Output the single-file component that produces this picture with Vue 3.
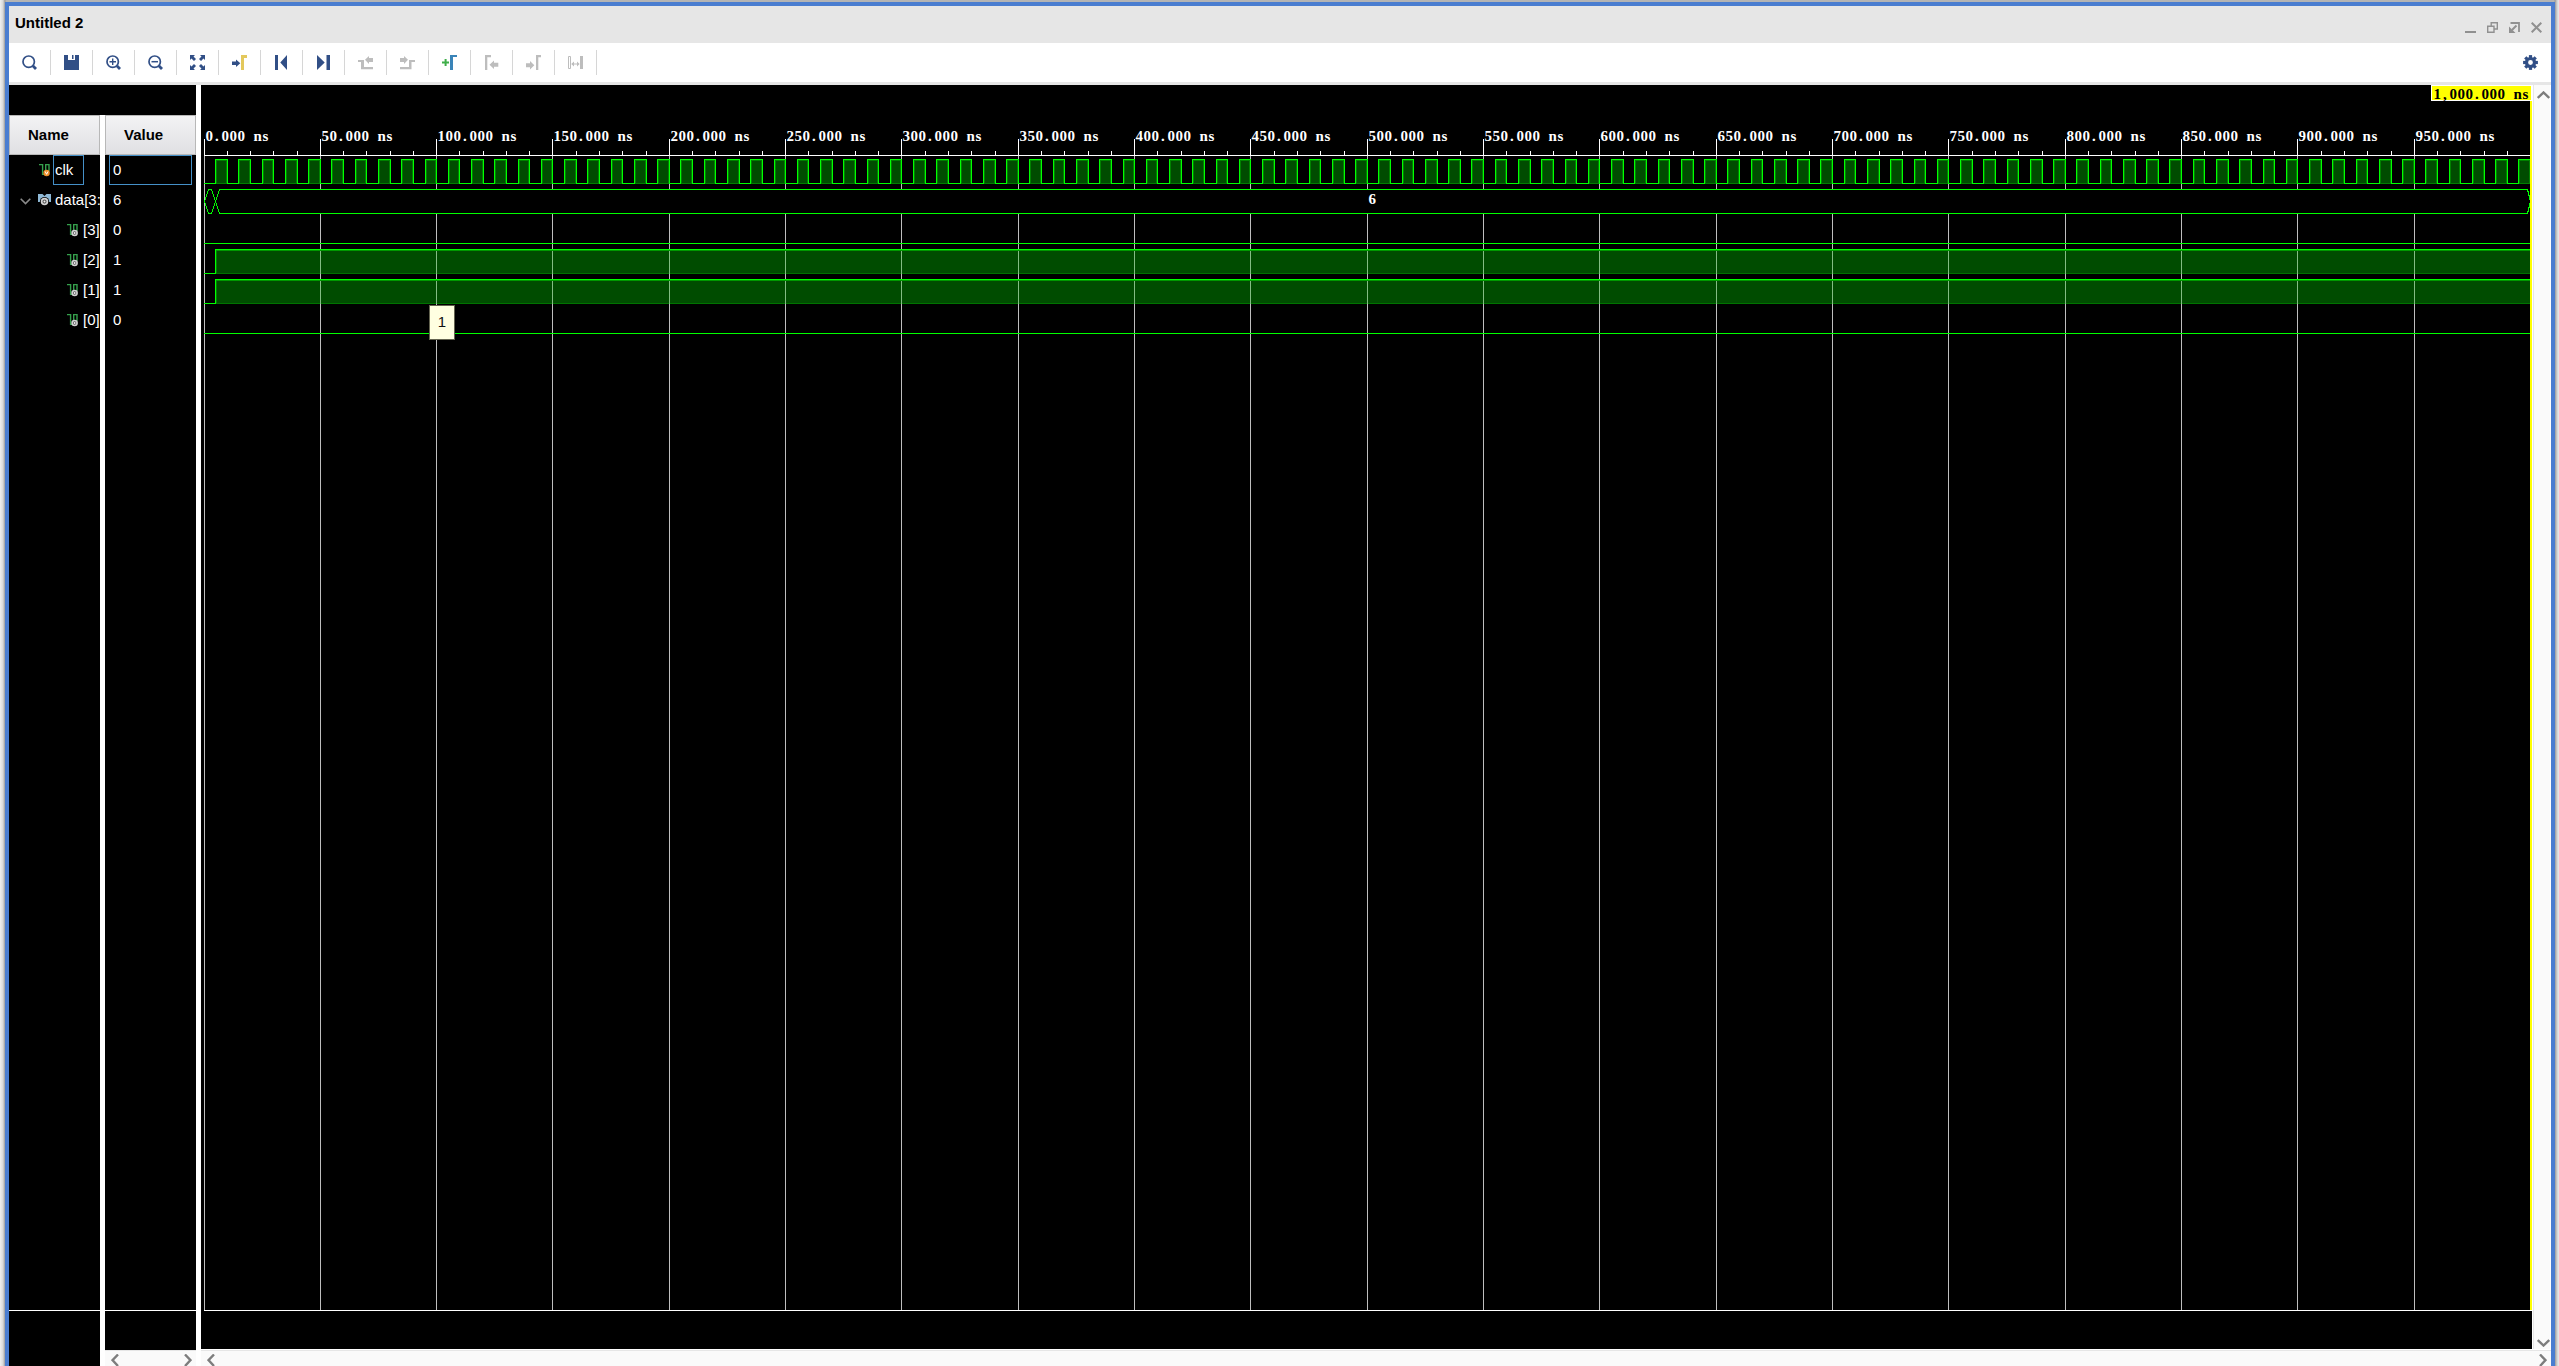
<script setup>
const pxPerNs = 2.3266
const x0 = 3
const at = (ns) => Math.floor(x0 + ns * pxPerNs)

// Labels use fixed 8px cells, one per character.
const cells = (text, x) =>
  [...text].map((c, i) => x + i * 8 + (c === '.' || c === ',' ? 1.5 : c === 's' ? 1 : 0)).join(' ')

const majors = Array.from({ length: 20 }, (_, i) => ({
  x: at(i * 50),
  label: `${i * 50}.000 ns`,
}))
const minors = Array.from({ length: 100 }, (_, i) => i * 10)
  .filter((ns) => ns % 50)
  .map(at)
const pulses = Array.from({ length: 100 }, (_, i) => ({
  rise: at(i * 10 + 5),
  fall: at(i * 10 + 10),
}))
const end = 2329
const highs = [164, 194]
const rows = [
  { name: 'clk', value: '0', kind: 'clk' },
  { name: 'data[3:0]', value: '6', kind: 'bus' },
  { name: '[3]', value: '0', kind: 'bit' },
  { name: '[2]', value: '1', kind: 'bit' },
  { name: '[1]', value: '1', kind: 'bit' },
  { name: '[0]', value: '0', kind: 'bit' },
]

const navy = '#314f86'
const grey = '#bdbdbd'
const lens = { d: 'M6.7 1A5.7 5.7 0 1 0 6.7 12.4A5.7 5.7 0 1 0 6.7 1Z', stroke: navy, w: 1.7 }
const handle = { d: 'M10.8 10.8L14 14', stroke: navy, w: 2.8 }
const tools = [
  [lens, handle],
  [
    { d: 'M0 0H4V5H11V0H15V15H0Z', fill: navy },
    { d: 'M8 0H9.5V4H8Z', fill: navy },
  ],
  [lens, handle, { d: 'M3.5 6.7H10M6.7 3.5V10', stroke: navy, w: 1.4 }],
  [lens, handle, { d: 'M3.5 6.7H10', stroke: navy, w: 1.5 }],
  [
    { d: 'M0 0H5L3.5 1.5L6 4L4 6L1.5 3.5L0 5ZM15 0V5L13.5 3.5L11 6L9 4L11.5 1.5L10 0ZM0 15V10L1.5 11.5L4 9L6 11L3.5 13.5L5 15ZM15 15H10L11.5 13.5L9 11L11 9L13.5 11.5L15 10Z', fill: navy },
  ],
  [
    { d: 'M0 6.5H4V4.5L8.3 8.3L4 12V10H0Z', fill: navy },
    { d: 'M9 0H15V3H12V15H9Z', fill: '#e3c85c' },
  ],
  [{ d: 'M1 0H4V15H1ZM13 0V15L6.3 7.5Z', fill: navy }],
  [{ d: 'M10.5 0H14V15H10.5ZM1 0V15L8.7 7.5Z', fill: navy }],
  [{ d: 'M0 5H6V12H15V14.3H3V7H0ZM7 4.7L11 1V3H15V7H11V9Z', fill: grey }],
  [{ d: 'M15 5H9V12H0V14.3H11.5V7H15ZM8 4.7L4 1V3H0V7H4V9Z', fill: grey }],
  [
    { d: 'M2.6 4H4.6V6.5H7V8.5H4.6V11H2.6V8.5H0V6.5H2.6Z', fill: '#3fae49' },
    { d: 'M8 0H15V2H11V15H8Z', fill: '#3a84b8' },
  ],
  [{ d: 'M1 0H7V2.2H3.3V15H1ZM5.5 9.7L10 5.5V7.7H14.3V11.7H10V14Z', fill: grey }],
  [{ d: 'M15 0V2.2H12.3V15H10V0ZM8.3 10.3L4 6V8.3H0V12.3H4V14.5Z', fill: grey }],
  [
    { d: 'M.5 1.5H2.5V13.5H.5Z', stroke: grey, w: 1 },
    { d: 'M12 1H15V14H12ZM3.2 9L6 6.5V8.5H9V6.5L11.6 9L9 11.5V9.5H6V11.5Z', fill: grey },
  ],
]
const teeth = [0, 45, 90, 135, 180, 225, 270, 315]
</script>

<template>
  <div class="screen">
    <div class="window">
      <header class="title">
        <span>Untitled 2</span>
        <div class="controls">
          <svg width="11" height="11"><path d="M0 10H11" stroke-width="2" /></svg>
          <svg width="11" height="11"><path d="M.7 4.2H7V10.3H.7ZM4.2 4V.7H10.3V7H7.2" stroke-width="1.4" /></svg>
          <svg width="11" height="11"><path d="M1.5 1H10V10" stroke-width="1.8" /><path d="M7.5 3.5L3 8" stroke-width="2" /><path class="solid" d="M0 4.5V11H6.5Z" /></svg>
          <svg width="11" height="11"><path d="M.7 .7L10.3 10.3M10.3 .7L.7 10.3" stroke-width="2" /></svg>
        </div>
      </header>
      <nav class="toolbar">
        <div v-for="(tool, i) in tools" :key="i" class="tool">
          <svg width="15" height="15">
            <path v-for="(p, j) in tool" :key="j" :d="p.d" :fill="p.fill || 'none'" :stroke="p.stroke || 'none'" :stroke-width="p.w" />
          </svg>
        </div>
        <svg class="gear" width="15" height="15" viewBox="-7.5 -7.5 15 15">
          <circle r="4" fill="none" stroke="#314f86" stroke-width="3.2" />
          <rect v-for="a in teeth" :key="a" x="-1.6" y="-7.4" width="3.2" height="3" fill="#314f86" :transform="`rotate(${a})`" />
        </svg>
      </nav>
      <main class="body">
        <section class="signals">
          <div class="spacer"></div>
          <div class="columns">
            <div class="column names">
              <div class="head"><b>Name</b></div>
              <div class="list">
                <div v-for="r in rows" :key="r.name" class="row" :class="r.kind">
                  <svg v-if="r.kind === 'bus'" class="chevron" width="11" height="7"><path d="M.7 .7L5.5 5.5L10.3 .7" fill="none" stroke="#8a8a8a" stroke-width="1.6" /></svg>
                  <svg v-if="r.kind === 'bus'" class="icon" width="14" height="14">
                    <path d="M0 1H4.5L6.5 3L8.5 1H13V9H0Z" fill="#8fb9d6" />
                    <circle cx="6.5" cy="8.6" r="4.6" fill="#000" />
                    <circle cx="6.5" cy="8.6" r="2.9" fill="#555" stroke="#d2d2d2" stroke-width="1.7" /><circle cx="6.5" cy="8.6" r="1" fill="#eee" />
                  </svg>
                  <svg v-else class="icon" width="14" height="14">
                    <path d="M0 1.6H3.6V11.4H6.7V1.6H10V8" fill="none" stroke="#35a04c" stroke-width="1.4" />
                    <circle v-if="r.kind === 'clk'" cx="7.6" cy="10" r="3.2" fill="#f0912b" />
                    <path v-if="r.kind === 'clk'" d="M6.2 8.5L7.6 11.3L9 8.5" fill="none" stroke="#fff" />
                    <template v-else><circle cx="7.6" cy="10" r="2.5" fill="#555" stroke="#d2d2d2" stroke-width="1.6" /><circle cx="7.6" cy="10" r="1" fill="#eee" /></template>
                  </svg>
                  <span class="label">{{ r.name }}</span>
                </div>
              </div>
              <div class="foot"></div>
            </div>
            <div class="column values">
              <div class="head"><b>Value</b></div>
              <div class="list">
                <div v-for="r in rows" :key="r.name" class="row value" :class="r.kind"><span class="cell">{{ r.value }}</span></div>
              </div>
              <div class="foot"></div>
              <div class="hscroll">
                <svg width="8" height="13"><path d="M7 .5L1.5 6.2L7 12" /></svg>
                <svg width="8" height="13"><path d="M1 .5L6.5 6.2L1 12" /></svg>
              </div>
            </div>
          </div>
        </section>
        <section class="wave">
          <div class="plot">
            <svg class="canvas" width="2331" height="1264" shape-rendering="crispEdges">
              <g fill="#bebebe">
                <rect v-for="m in majors" :key="m.x" :x="m.x" y="70" width="1" height="1155" />
              </g>
              <g fill="#fff">
                <rect x="3" y="70" :width="end - 3" height="1" />
                <rect v-for="m in majors" :key="m.x" :x="m.x" y="54" width="1" height="17" />
                <rect v-for="x in minors" :key="x" :x="x" y="66" width="1" height="5" />
                <rect x="3" y="1225" width="2328" height="1" />
              </g>
              <g class="mono" fill="#fff">
                <text v-for="m in majors" :key="m.x" :x="cells(m.label, m.x + 1.6)" y="56">{{ m.label }}</text>
              </g>
              <rect x="3" y="98" :width="end - 3" height="1" fill="#00ff00" />
              <g v-for="p in pulses" :key="p.rise">
                <rect :x="p.rise" y="74" :width="p.fall - p.rise + 1" height="25" fill="#00ff00" />
                <rect :x="p.rise + 1" y="75" :width="p.fall - p.rise - 1" height="24" fill="#008000" />
                <rect :x="p.rise + 2" y="76" :width="p.fall - p.rise - 3" height="22" fill="#004c00" />
              </g>
              <rect x="4" y="104" :width="end - 4" height="25" fill="#000" />
              <path d="M3.5 116.5L7.5 104.5H10.5L14.5 116.5L18.5 128.5H2326.5L2329.5 116.5L2326.5 104.5H18.5L14.5 116.5L10.5 128.5H7.5Z" fill="none" stroke="#00ff00" />
              <text class="mono" x="1167.5" y="119" fill="#fff">6</text>
              <rect x="3" y="158" :width="end - 3" height="1" fill="#00ff00" />
              <g v-for="y in highs" :key="y">
                <rect x="3" :y="y + 24" width="12" height="1" fill="#00ff00" />
                <rect x="14" :y="y" :width="end - 14" height="25" fill="#004c00" />
                <rect x="14" :y="y + 24" :width="end - 14" height="1" fill="#007300" />
                <rect v-for="m in majors.slice(1)" :key="m.x" :x="m.x" :y="y + 2" width="1" height="23" fill="#83bd83" />
                <rect x="15" :y="y + 1" width="1" height="23" fill="#008000" />
                <rect x="14" :y="y" width="1" height="25" fill="#00ff00" />
                <rect x="14" :y="y" :width="end - 14" height="1" fill="#00ff00" />
                <rect x="15" :y="y + 1" :width="end - 15" height="1" fill="#009800" />
              </g>
              <rect x="3" y="248" :width="end - 3" height="1" fill="#00ff00" />
              <rect :x="end" y="0" width="2" height="1225" fill="#ffff00" />
              <rect x="2230" y="0" width="101" height="16" fill="#fff" />
              <rect x="2231" y="1" width="99" height="14" fill="#ffff00" />
              <text class="mono" :x="cells('1,000.000 ns', 2232.5)" y="14" fill="#000">1,000.000 ns</text>
            </svg>
            <div class="vscroll">
              <svg width="13" height="8"><path d="M.8 7L6.5 1.5L12.2 7" /></svg>
              <svg width="13" height="8"><path d="M.8 1L6.5 6.5L12.2 1" /></svg>
            </div>
          </div>
          <div class="hscroll">
            <svg width="8" height="13"><path d="M7 .5L1.5 6.2L7 12" /></svg>
            <svg width="8" height="13"><path d="M1 .5L6.5 6.2L1 12" /></svg>
          </div>
          <div class="tip">1</div>
        </section>
      </main>
    </div>
  </div>
</template>

<style scoped>
.screen {
  width: 2559px;
  height: 1366px;
  box-sizing: border-box;
  padding: 2px 4px 0 5px;
  overflow: hidden;
  background: linear-gradient(90deg, #f0f0f0 0, #d8d8d8 3px, #999 5px, #b4b4b4 6px, #b4b4b4 2554px, #999 2555px, #d0d0d0 2557px, #ececec 2559px);
  font: 15px/18px "Liberation Sans", Arial, sans-serif;
}
.window {
  display: flex;
  flex-direction: column;
  height: 1364px;
  box-sizing: border-box;
  border: 4px solid #4a7dd0;
  border-bottom: 0;
  background: #fff;
}
.title {
  display: flex;
  justify-content: space-between;
  height: 37px;
  flex: none;
  padding: 0 9px 0 6px;
  background: #e6e6e6;
  font-weight: bold;
}
.title span { padding-top: 8px; }
.controls { display: flex; gap: 11px; padding-top: 16px; }
.controls svg { fill: none; stroke: #909090; }
.controls .solid { fill: #909090; stroke: none; }
.toolbar {
  display: flex;
  align-items: center;
  height: 39px;
  flex: none;
  border-bottom: 3px solid #e6e6e6;
}
.tool {
  display: flex;
  align-items: center;
  justify-content: center;
  width: 41px;
  height: 25px;
  border-right: 1px solid #d6d6d6;
}
.gear { margin-left: auto; margin-right: 13px; }
.body { display: flex; flex: 1; min-height: 0; }
.signals { display: flex; flex-direction: column; width: 187px; margin-right: 5px; }
.spacer { height: 30px; flex: none; background: #000; }
.columns { display: flex; gap: 5px; flex: 1; min-height: 0; }
.column { display: flex; flex-direction: column; width: 91px; overflow: hidden; background: #000; }
.head {
  height: 40px;
  flex: none;
  box-sizing: border-box;
  border: 1px solid #b8b8b8;
  background: linear-gradient(#f3f3f4, #e0e0e3);
  padding: 10px 0 0 18px;
}
.list { height: 1155px; flex: none; }
.foot { flex: 1; border-top: 1px solid #fff; }
.row { display: flex; align-items: center; height: 30px; color: #fff; white-space: nowrap; }
.names .row { padding-left: 58px; }
.names .row.clk { padding-left: 30px; }
.names .row.bus { padding-left: 11px; }
.chevron { flex: none; margin: 2px 7px 0 0; }
.icon { flex: none; margin-right: 2px; }
.bus .icon { margin-right: 3px; }
.clk .label { box-sizing: border-box; border: 1px solid #4590c8; height: 30px; width: 31px; margin-left: -2px; padding: 5px 0 0 1px; }
.value { padding-left: 8px; }
.value.clk { padding-left: 4px; }
.value.clk .cell { box-sizing: border-box; width: 83px; height: 30px; border: 1px solid #4590c8; padding: 5px 0 0 3px; }
.hscroll {
  display: flex;
  justify-content: space-between;
  flex: none;
  height: 16px;
  box-sizing: border-box;
  border-top: 1px solid #e6e6e6;
  padding: 3px 4px 0 6px;
  background: #fafafa;
  overflow: hidden;
}
.hscroll svg, .vscroll svg { flex: none; fill: none; stroke: #7d7d7d; stroke-width: 2.4; }
.wave { position: relative; flex: 1; display: flex; flex-direction: column; }
.plot { display: flex; height: 1264px; margin-bottom: 1px; }
.canvas { display: block; flex: none; background: #000; }
.mono { font: bold 15px "Liberation Serif", "Times New Roman", serif; }
.vscroll {
  display: flex;
  flex-direction: column;
  align-items: center;
  justify-content: space-between;
  width: 17px;
  margin-left: 1px;
  box-sizing: border-box;
  border-left: 1px solid #e6e6e6;
  padding: 6px 0 2px 2px;
  background: #fafafa;
}
.tip {
  position: absolute;
  left: 228px;
  top: 220px;
  width: 26px;
  height: 35px;
  box-sizing: border-box;
  border: 1px solid #646450;
  background: #ffffe1;
  color: #111;
  text-align: center;
  line-height: 31px;
}
</style>

<style>
body { margin: 0; overflow: hidden; }
</style>
